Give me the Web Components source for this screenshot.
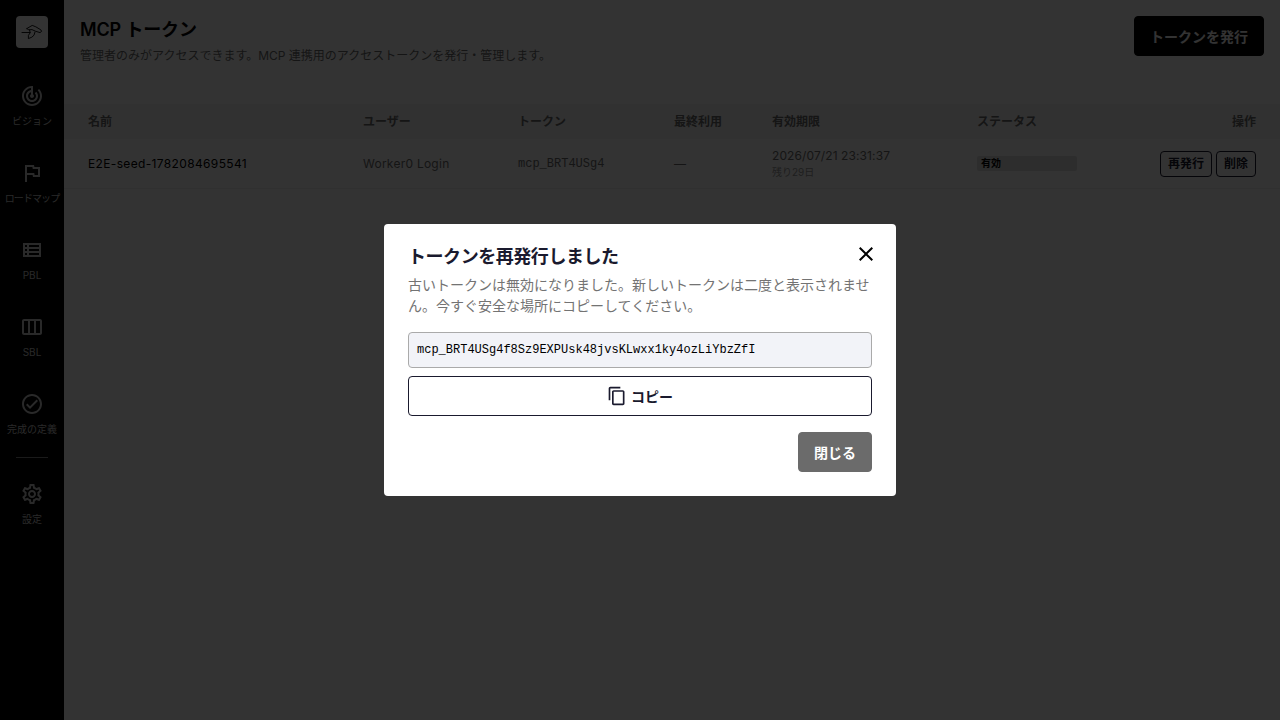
<!DOCTYPE html>
<html lang="ja">
<head>
<meta charset="utf-8">
<title>MCP トークン</title>
<style>
  :root {
    --text: #000;
    --text-muted: #6b6b6b;
    --navy: #1a1a2e;
    --radius: 4px;
  }
  body {
    margin: 0;
    background: #fff;
    color: var(--text);
    font-family: Inter, "Noto Sans CJK JP", sans-serif;
    overflow: hidden;
  }
</style>
</head>
<body>
<app-shell>
  <side-nav slot="nav">
    <nav-item icon="vision">ビジョン</nav-item>
    <nav-item icon="flag" tight>ロードマップ</nav-item>
    <nav-item icon="list">PBL</nav-item>
    <nav-item icon="columns">SBL</nav-item>
    <nav-item icon="check">完成の定義</nav-item>
    <nav-item slot="footer" icon="settings">設定</nav-item>
  </side-nav>
  <page-header>
    <span slot="title">MCP トークン</span>
    <span slot="description">管理者のみがアクセスできます。MCP 連携用のアクセストークンを発行・管理します。</span>
    <ui-button slot="action" variant="primary">トークンを発行</ui-button>
  </page-header>
  <token-table></token-table>
</app-shell>
<modal-dialog>
  <span slot="title">トークンを再発行しました</span>
  <span slot="description">古いトークンは無効になりました。新しいトークンは二度と表示されません。今すぐ安全な場所にコピーしてください。</span>
  <token-field>mcp_BRT4USg4f8Sz9EXPUsk48jvsKLwxx1ky4ozLiYbzZfI</token-field>
  <ui-button variant="outline"><ui-icon name="copy" size="20"></ui-icon><span>コピー</span></ui-button>
  <ui-button slot="footer" variant="neutral">閉じる</ui-button>
</modal-dialog>

<script>
const ICONS = {
  vision: 'M19.07 4.93l-1.41 1.41C19.1 7.79 20 9.79 20 12c0 4.42-3.58 8-8 8s-8-3.58-8-8c0-4.08 3.05-7.44 7-7.93v2.02C8.16 6.57 6 9.03 6 12c0 3.31 2.69 6 6 6s6-2.69 6-6c0-1.66-.67-3.16-1.76-4.24l-1.41 1.41C15.55 9.9 16 10.9 16 12c0 2.21-1.79 4-4 4s-4-1.79-4-4c0-1.86 1.28-3.41 3-3.86v2.14c-.6.35-1 .98-1 1.72 0 1.1.9 2 2 2s2-.9 2-2c0-.74-.4-1.38-1-1.72V2h-1C6.48 2 2 6.48 2 12s4.48 10 10 10 10-4.48 10-10c0-2.76-1.12-5.26-2.93-7.07z',
  flag: 'M12.36 6l.4 2H18v6h-3.36l-.4-2H7V6h5.36M14 4H5v17h2v-7h5.6l.4 2h7V6h-5.6L14 4z',
  list: 'M3 5v14h18V5H3zm4 2v2H5V7h2zm-2 6v-2h2v2H5zm0 2h2v2H5v-2zm14 2H9v-2h10v2zm0-4H9v-2h10v2zm0-4H9V7h10v2z',
  columns: 'M20 4H4c-1.1 0-2 .9-2 2v12c0 1.1.9 2 2 2h16c1.1 0 2-.9 2-2V6c0-1.1-.9-2-2-2zM8 18H4V6h4v12zm6 0h-4V6h4v12zm6 0h-4V6h4v12z',
  check: 'M12 2C6.48 2 2 6.48 2 12s4.48 10 10 10 10-4.48 10-10S17.52 2 12 2zm0 18c-4.41 0-8-3.59-8-8s3.59-8 8-8 8 3.59 8 8-3.59 8-8 8zm4.59-12.42L10 14.17l-2.59-2.58L6 13l4 4 8-8z',
  settings: 'M19.43 12.98c.04-.32.07-.64.07-.98 0-.34-.03-.66-.07-.98l2.11-1.65c.19-.15.24-.42.12-.64l-2-3.46c-.09-.16-.26-.25-.44-.25-.06 0-.12.01-.17.03l-2.49 1c-.52-.4-1.08-.73-1.69-.98l-.38-2.65C14.46 2.18 14.25 2 14 2h-4c-.25 0-.46.18-.49.42l-.38 2.65c-.61.25-1.17.59-1.69.98l-2.49-1c-.06-.02-.12-.03-.18-.03-.17 0-.34.09-.43.25l-2 3.46c-.13.22-.07.49.12.64l2.11 1.65c-.04.32-.07.65-.07.98 0 .33.03.66.07.98l-2.11 1.65c-.19.15-.24.42-.12.64l2 3.46c.09.16.26.25.44.25.06 0 .12-.01.17-.03l2.49-1c.52.4 1.08.73 1.69.98l.38 2.65c.03.24.24.42.49.42h4c.25 0 .46-.18.49-.42l.38-2.65c.61-.25 1.17-.59 1.69-.98l2.49 1c.06.02.12.03.18.03.17 0 .34-.09.43-.25l2-3.46c.12-.22.07-.49-.12-.64l-2.11-1.65zm-1.98-1.71c.04.31.05.52.05.73 0 .21-.02.43-.05.73l-.14 1.13.89.7 1.08.84-.7 1.21-1.27-.51-1.04-.42-.9.68c-.43.32-.84.56-1.25.73l-1.06.43-.16 1.13-.2 1.35h-1.4l-.19-1.35-.16-1.13-1.06-.43c-.43-.18-.83-.41-1.23-.71l-.91-.7-1.06.43-1.27.51-.7-1.21 1.08-.84.89-.7-.14-1.13c-.03-.31-.05-.54-.05-.74s.02-.43.05-.73l.14-1.13-.89-.7-1.08-.84.7-1.21 1.27.51 1.04.42.9-.68c.43-.32.84-.56 1.25-.73l1.06-.43.16-1.13.2-1.35h1.39l.19 1.35.16 1.13 1.06.43c.43.18.83.41 1.23.71l.91.7 1.06-.43 1.27-.51.7 1.21-1.07.85-.89.7.14 1.13zM12 8c-2.21 0-4 1.79-4 4s1.79 4 4 4 4-1.79 4-4-1.79-4-4-4zm0 6c-1.1 0-2-.9-2-2s.9-2 2-2 2 .9 2 2-.9 2-2 2z',
  copy: 'M16 1H4c-1.1 0-2 .9-2 2v14h2V3h12V1zm3 4H8c-1.1 0-2 .9-2 2v14c0 1.1.9 2 2 2h11c1.1 0 2-.9 2-2V7c0-1.1-.9-2-2-2zm0 16H8V7h11v14z',
  close: 'M19 6.41L17.59 5 12 10.59 6.41 5 5 6.41 10.59 12 5 17.59 6.41 19 12 13.41 17.59 19 19 17.59 13.41 12z',
};

class UiIcon extends HTMLElement {
  connectedCallback() {
    if (this.shadowRoot) return;
    const size = this.getAttribute('size') || 24;
    this.attachShadow({ mode: 'open' }).innerHTML = `
      <style>
        :host { display: block; flex: none; }
        svg { display: block; fill: currentColor; }
      </style>
      <svg width="${size}" height="${size}" viewBox="0 0 24 24" aria-hidden="true">
        <path d="${ICONS[this.getAttribute('name')]}"/>
      </svg>
    `;
  }
}

class UiButton extends HTMLElement {
  constructor() {
    super();
    this.attachShadow({ mode: 'open' }).innerHTML = `
      <style>
        :host { display: block; }
        button {
          display: flex;
          align-items: center;
          justify-content: center;
          gap: 4px;
          box-sizing: border-box;
          width: 100%;
          height: 40px;
          padding: 0 15px;
          border: 1px solid transparent;
          border-radius: var(--radius);
          font: 700 14px/21px Inter, "Noto Sans CJK JP", sans-serif;
          white-space: nowrap;
          cursor: pointer;
        }
        :host([variant="primary"]) button { background: #000; border-color: #000; color: #fff; }
        :host([variant="neutral"]) button { background: #6b6b6b; border-color: #6b6b6b; color: #fff; }
        :host([variant="outline"]) button { background: #fff; border-color: var(--navy); color: var(--navy); }
        :host([size="small"]) button { height: 26px; padding: 0 7px; font-size: 12px; line-height: 18px; }
      </style>
      <button type="button"><slot></slot></button>
    `;
  }
}

class AppShell extends HTMLElement {
  constructor() {
    super();
    this.attachShadow({ mode: 'open' }).innerHTML = `
      <style>
        :host { display: flex; height: 100vh; }
        main { flex: 1; min-width: 0; }
      </style>
      <slot name="nav"></slot>
      <main><slot></slot></main>
    `;
  }
}

class SideNav extends HTMLElement {
  constructor() {
    super();
    this.attachShadow({ mode: 'open' }).innerHTML = `
      <style>
        :host {
          display: flex;
          flex-direction: column;
          align-items: center;
          box-sizing: border-box;
          width: 64px;
          flex: none;
          padding-top: 16px;
          background: #000;
          color: #ccc;
        }
        .logo {
          width: 32px;
          height: 32px;
          margin-bottom: 24px;
          border-radius: var(--radius);
          background: #fff;
        }
        hr {
          width: 32px;
          height: 1px;
          margin: 0 0 12px;
          border: 0;
          background: #808080;
        }
      </style>
      <div class="logo">
        <svg width="32" height="32" viewBox="0 0 32 32" fill="none" stroke="#000" stroke-width=".9" stroke-linejoin="round" stroke-linecap="round">
          <path d="M6 16.5h8M10.8 12.6l5.4-3.2 3.6 1.4 5 3 .8 1.6-1.6 1.2-4.6-1.4-3.4-1.6-3.2.2-2-1.2M13.6 14.2l.6 2.6-1.8 2.6v3.2l3.4-1.4 2.2-2 1-3.2"/>
        </svg>
      </div>
      <slot></slot>
      <hr>
      <slot name="footer"></slot>
    `;
  }
}

class NavItem extends HTMLElement {
  connectedCallback() {
    if (this.shadowRoot) return;
    this.attachShadow({ mode: 'open' }).innerHTML = `
      <style>
        :host {
          display: flex;
          flex-direction: column;
          align-items: center;
          gap: 6px;
          box-sizing: border-box;
          width: 64px;
          height: 77px;
          padding-top: 12px;
          font-size: 10px;
          line-height: 15px;
          white-space: nowrap;
        }
        :host([tight]) { letter-spacing: -.9px; }
      </style>
      <ui-icon name="${this.getAttribute('icon')}"></ui-icon>
      <span><slot></slot></span>
    `;
  }
}

class PageHeader extends HTMLElement {
  constructor() {
    super();
    this.attachShadow({ mode: 'open' }).innerHTML = `
      <style>
        :host {
          display: flex;
          justify-content: space-between;
          align-items: flex-start;
          box-sizing: border-box;
          height: 104px;
          padding: 16px;
        }
        h1 { margin: 0; font-size: 18px; font-weight: 600; line-height: 27px; letter-spacing: -.15px; }
        p { margin: 4px 0 0; color: var(--text-muted); font-size: 12px; line-height: 18px; }
      </style>
      <div>
        <h1><slot name="title"></slot></h1>
        <p><slot name="description"></slot></p>
      </div>
      <slot name="action"></slot>
    `;
  }
}

class TokenTable extends HTMLElement {
  constructor() {
    super();
    this.attachShadow({ mode: 'open' }).innerHTML = `
      <style>
        :host { display: block; font-size: 12px; line-height: 18px; }
        .row {
          display: grid;
          grid-template-columns: 275px 155px 156px 98px 205px 100px 1fr;
          align-items: center;
          padding: 0 24px;
        }
        .head { height: 35px; background: #f5f5f5; color: var(--text-muted); font-weight: 600; }
        .body { height: 49px; border-bottom: 1px solid #eee; color: var(--text-muted); }
        .end { text-align: right; }
        .name { color: var(--text); letter-spacing: .35px; }
        .user { letter-spacing: .25px; }
        .mono { font-family: "Liberation Mono", monospace; }
        .date { line-height: 16px; letter-spacing: .1px; }
        .rest { display: block; color: #999; font-size: 10px; letter-spacing: 0; }
        .badge {
          padding: 0 4px;
          border-radius: 2px;
          background: #dedede;
          color: var(--text);
          font-size: 10px;
          font-weight: 700;
          line-height: 15px;
        }
        .actions { display: flex; justify-content: flex-end; gap: 4px; }
      </style>
      <div class="row head">
        <span>名前</span><span>ユーザー</span><span>トークン</span><span>最終利用</span>
        <span>有効期限</span><span>ステータス</span><span class="end">操作</span>
      </div>
      <div class="row body">
        <span class="name">E2E-seed-1782084695541</span>
        <span class="user">Worker0 Login</span>
        <span class="mono">mcp_BRT4USg4</span>
        <span>—</span>
        <span class="date">2026/07/21 23:31:37<span class="rest">残り29日</span></span>
        <span class="badge">有効</span>
        <div class="actions">
          <ui-button variant="outline" size="small">再発行</ui-button>
          <ui-button variant="outline" size="small">削除</ui-button>
        </div>
      </div>
    `;
  }
}

class TokenField extends HTMLElement {
  constructor() {
    super();
    this.attachShadow({ mode: 'open' }).innerHTML = `
      <style>
        :host {
          display: block;
          box-sizing: border-box;
          height: 36px;
          padding: 8px;
          border: 1px solid #aaa;
          border-radius: var(--radius);
          background: #f2f3f8;
          font: 12px/18px "Liberation Mono", monospace;
        }
      </style>
      <slot></slot>
    `;
  }
}

class ModalDialog extends HTMLElement {
  constructor() {
    super();
    this.attachShadow({ mode: 'open' }).innerHTML = `
      <style>
        :host {
          position: fixed;
          inset: 0;
          display: flex;
          align-items: center;
          justify-content: center;
          background: rgba(0, 0, 0, .8);
        }
        .panel {
          position: relative;
          display: flex;
          flex-direction: column;
          gap: 16px;
          box-sizing: border-box;
          width: 512px;
          padding: 24px;
          border-radius: var(--radius);
          background: #fff;
        }
        h2 { margin: 0 0 8px; color: var(--navy); font-size: 18px; font-weight: 600; line-height: 18px; letter-spacing: -.025em; }
        p { margin: 0; color: #737373; font-size: 14px; line-height: 21px; }
        .content { display: flex; flex-direction: column; gap: 8px; }
        footer { display: flex; justify-content: flex-end; }
        .close {
          position: absolute;
          top: 18px;
          right: 18px;
          padding: 0;
          border: 0;
          background: none;
          color: #000;
          cursor: pointer;
        }
      </style>
      <div class="panel" role="dialog" aria-modal="true">
        <header>
          <h2><slot name="title"></slot></h2>
          <p><slot name="description"></slot></p>
        </header>
        <div class="content"><slot></slot></div>
        <footer><slot name="footer"></slot></footer>
        <button class="close" type="button" aria-label="閉じる"><ui-icon name="close"></ui-icon></button>
      </div>
    `;
  }
}

customElements.define('ui-icon', UiIcon);
customElements.define('ui-button', UiButton);
customElements.define('app-shell', AppShell);
customElements.define('side-nav', SideNav);
customElements.define('nav-item', NavItem);
customElements.define('page-header', PageHeader);
customElements.define('token-table', TokenTable);
customElements.define('token-field', TokenField);
customElements.define('modal-dialog', ModalDialog);
</script>
</body>
</html>
